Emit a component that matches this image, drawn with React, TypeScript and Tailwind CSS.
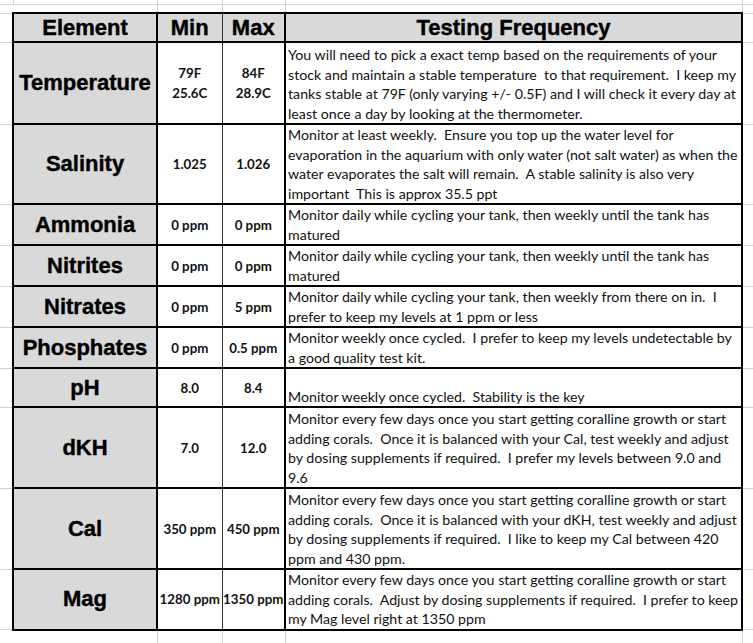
const HEAD =
  "font-['Liberation_Sans',Arial,sans-serif] font-bold text-[22px] leading-none [-webkit-text-stroke:0.4px_black]";
const BODY = "font-['Lato','Open_Sans',sans-serif] text-[14.2px] leading-[19.5px] text-[#111]";
const GRID = "border-[#d4d4d4]";

type Row = {
  name: string;
  min: string[];
  max: string[];
  h: number;
  text: string[];
};

const ROWS: Row[] = [
  {
    name: "Temperature",
    min: ["79F", "25.6C"],
    max: ["84F", "28.9C"],
    h: 82,
    text: [
      "You will need to pick a exact temp based on the requirements of your",
      "stock and maintain a stable temperature  to that requirement.  I keep my",
      "tanks stable at 79F (only varying +/- 0.5F) and I will check it every day at",
      "least once a day by looking at the thermometer.",
    ],
  },
  {
    name: "Salinity",
    min: ["1.025"],
    max: ["1.026"],
    h: 80,
    text: [
      "Monitor at least weekly.  Ensure you top up the water level for",
      "evaporation in the aquarium with only water (not salt water) as when the",
      "water evaporates the salt will remain.  A stable salinity is also very",
      "important  This is approx 35.5 ppt",
    ],
  },
  {
    name: "Ammonia",
    min: ["0 ppm"],
    max: ["0 ppm"],
    h: 41,
    text: ["Monitor daily while cycling your tank, then weekly until the tank has", "matured"],
  },
  {
    name: "Nitrites",
    min: ["0 ppm"],
    max: ["0 ppm"],
    h: 41,
    text: ["Monitor daily while cycling your tank, then weekly until the tank has", "matured"],
  },
  {
    name: "Nitrates",
    min: ["0 ppm"],
    max: ["5 ppm"],
    h: 41,
    text: [
      "Monitor daily while cycling your tank, then weekly from there on in.  I",
      "prefer to keep my levels at 1 ppm or less",
    ],
  },
  {
    name: "Phosphates",
    min: ["0 ppm"],
    max: ["0.5 ppm"],
    h: 41,
    text: [
      "Monitor weekly once cycled.  I prefer to keep my levels undetectable by",
      "a good quality test kit.",
    ],
  },
  {
    name: "pH",
    min: ["8.0"],
    max: ["8.4"],
    h: 39,
    text: ["Monitor weekly once cycled.  Stability is the key"],
  },
  {
    name: "dKH",
    min: ["7.0"],
    max: ["12.0"],
    h: 81,
    text: [
      "Monitor every few days once you start getting coralline growth or start",
      "adding corals.  Once it is balanced with your Cal, test weekly and adjust",
      "by dosing supplements if required.  I prefer my levels between 9.0 and",
      "9.6",
    ],
  },
  {
    name: "Cal",
    min: ["350 ppm"],
    max: ["450 ppm"],
    h: 81,
    text: [
      "Monitor every few days once you start getting coralline growth or start",
      "adding corals.  Once it is balanced with your dKH, test weekly and adjust",
      "by dosing supplements if required.  I like to keep my Cal between 420",
      "ppm and 430 ppm.",
    ],
  },
  {
    name: "Mag",
    min: ["1280 ppm"],
    max: ["1350 ppm"],
    h: 60,
    text: [
      "Monitor every few days once you start getting coralline growth or start",
      "adding corals.  Adjust by dosing supplements if required.  I prefer to keep",
      "my Mag level right at 1350 ppm",
    ],
  },
];

function Values({ vals }: { vals: string[] }) {
  return (
    <div className="font-['Lato',sans-serif] font-bold text-[13.3px] leading-[20px] text-[#111]">
      {vals.map((v) => (
        <div key={v} className="whitespace-nowrap">
          {v}
        </div>
      ))}
    </div>
  );
}

export default function App() {
  return (
    <div className="w-[753px] h-[643px] overflow-hidden bg-white">
      <table className="table-fixed border-collapse w-[770px]">
        <colgroup>
          <col className="w-[13px]" />
          <col className="w-[144px]" />
          <col className="w-[65px]" />
          <col className="w-[63px]" />
          <col className="w-[457px]" />
          <col className="w-[28px]" />
        </colgroup>
        <tbody>
          <tr className="h-[4px]">
            <td className={`p-0 border-b border-r ${GRID}`} />
            <td className={`p-0 border-b border-r ${GRID}`} />
            <td className={`p-0 border-b border-r ${GRID}`} />
            <td className={`p-0 border-b border-r ${GRID}`} />
            <td className={`p-0 border-b border-r ${GRID}`} />
            <td className={`p-0 border-b ${GRID}`} />
          </tr>
          <tr className="h-[9px]">
            <td className={`p-0 border-b ${GRID}`} />
            <td className={`p-0 border-r ${GRID}`} />
            <td className={`p-0 border-r ${GRID}`} />
            <td className={`p-0 border-r ${GRID}`} />
            <td className={`p-0 border-r ${GRID}`} />
            <td className={`p-0 border-b ${GRID}`} />
          </tr>
          <tr className="h-[29px]">
            <td className={`p-0 border-b ${GRID}`} />
            <td className={`p-0 border-2 border-black bg-[#d9d9d9] text-center ${HEAD}`}>Element</td>
            <td className={`p-0 border-y-2 border-y-black border-r border-r-[#333] bg-[#d9d9d9] text-center ${HEAD}`}>
              Min
            </td>
            <td className={`p-0 border-y-2 border-y-black border-r border-r-[#333] bg-[#d9d9d9] text-center ${HEAD}`}>
              Max
            </td>
            <td className={`p-0 border-2 border-black bg-[#d9d9d9] text-center ${HEAD}`}>
              Testing Frequency
            </td>
            <td className={`p-0 border-b ${GRID}`} />
          </tr>
          {ROWS.map((r) => (
            <tr key={r.name} style={{ height: r.h }}>
              <td className={`p-0 border-b ${GRID}`} />
              <td className={`p-0 border-2 border-black bg-[#d9d9d9] text-center align-middle ${HEAD}`}>
                {r.name}
              </td>
              <td className="p-0 border-y-2 border-y-black border-r border-r-[#333] text-center align-middle">
                <Values vals={r.min} />
              </td>
              <td className="p-0 border-y-2 border-y-black border-r border-r-[#333] text-center align-middle">
                <Values vals={r.max} />
              </td>
              <td className={`p-0 pl-[2px] border-2 border-black align-bottom ${BODY}`}>
                {r.text.map((t, i) => (
                  <div key={i} className="whitespace-pre">
                    {t}
                  </div>
                ))}
              </td>
              <td className={`p-0 border-b ${GRID}`} />
            </tr>
          ))}
          <tr className="h-[30px]">
            <td className={`p-0 ${GRID}`} />
            <td className={`p-0 border-r ${GRID}`} />
            <td className={`p-0 border-r ${GRID}`} />
            <td className={`p-0 border-r ${GRID}`} />
            <td className={`p-0 border-r ${GRID}`} />
            <td className="p-0" />
          </tr>
        </tbody>
      </table>
    </div>
  );
}
